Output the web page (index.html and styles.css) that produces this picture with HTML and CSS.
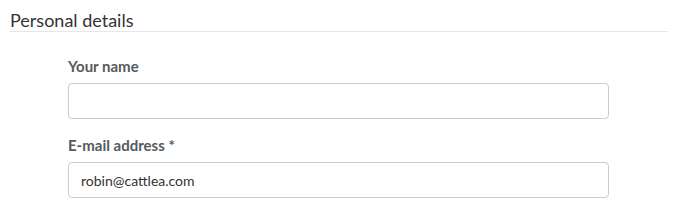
FILE: index.html
```html
<!DOCTYPE html>
<html>
<head>
<meta charset="utf-8">
<link rel="stylesheet" href="styles.css">
</head>
<body>
<section class="section">
  <h2 class="section-title">Personal details</h2>
  <div class="fields">
    <div class="field">
      <label class="field-label" for="name">Your name</label>
      <input class="field-input" id="name" type="text" value="">
    </div>
    <div class="field">
      <label class="field-label" for="email">E-mail address *</label>
      <input class="field-input" id="email" type="text" value="robin@cattlea.com">
    </div>
  </div>
</section>
</body>
</html>
```
FILE: styles.css
```css
html, body {
  margin: 0;
  padding: 0;
  background: #fff;
}
body {
  font-family: Lato, "Open Sans", sans-serif;
  color: #333;
}
.section {
  padding: 9px 10px 0 10px;
}
.section-title {
  margin: 0;
  font-size: 18px;
  font-weight: 400;
  line-height: 22px;
  color: #333;
  border-bottom: 1px solid #e6e6e6;
}
.fields {
  padding-left: 58px;
  padding-top: 24px;
  display: flex;
  flex-direction: column;
  gap: 16px;
}
.field {
  display: flex;
  flex-direction: column;
  gap: 7px;
}
.field-label {
  font-size: 15px;
  font-weight: 700;
  line-height: 20px;
  color: #555a5c;
}
.field-input {
  box-sizing: border-box;
  width: 541px;
  height: 36px;
  margin: 0;
  padding: 0 12px;
  border: 1px solid #cccccc;
  border-radius: 4px;
  font-family: Lato, sans-serif;
  font-size: 14px;
  color: #333;
  background: #fff;
  outline: none;
}
```
